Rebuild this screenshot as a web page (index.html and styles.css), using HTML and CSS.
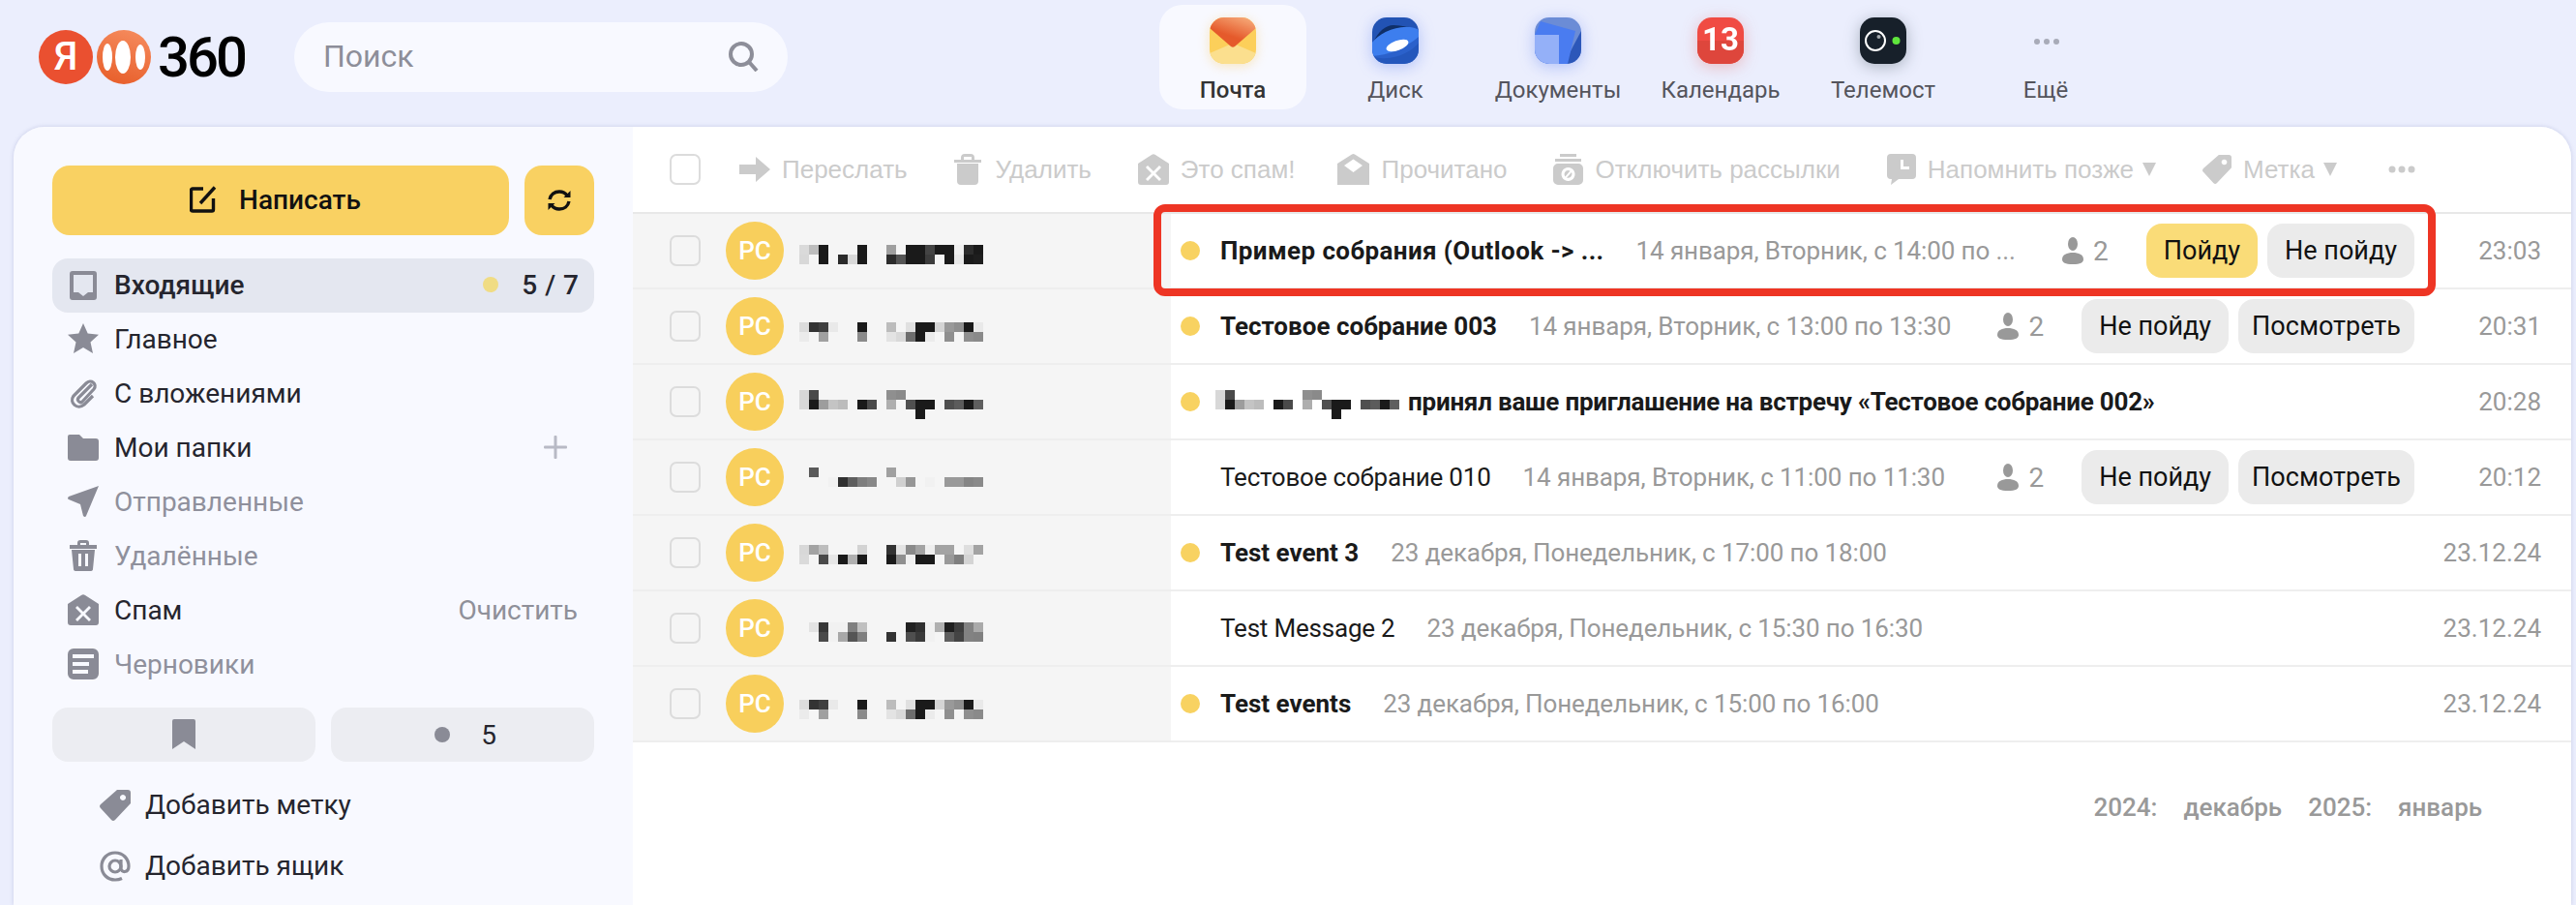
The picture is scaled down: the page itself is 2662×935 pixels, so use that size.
FILE: index.html
```html
<!DOCTYPE html>
<html lang="ru">
<head>
    <meta charset="UTF-8" />
    <title>Яндекс Почта</title>
    <link rel="stylesheet" href="styles.css">
</head>
<body>
    <svg class="defs" width="0" height="0">
        <defs>
            <symbol id="name-a" viewBox="0 0 190 30">
                <g class="px">
                    <rect x="0" y="0" fill="#dcdcdc"/><rect x="10" y="0" fill="#333"/><rect x="20" y="0" fill="#3f3f3f"/><rect x="30" y="0" fill="#e9e9e9"/><rect x="60" y="0" fill="#1a1a1a"/><rect x="90" y="0" fill="#bcbcbc"/><rect x="110" y="0" fill="#e0e0e0"/><rect x="120" y="0" fill="#1a1a1a"/><rect x="130" y="0" fill="#1a1a1a"/><rect x="140" y="0" fill="#d4d4d4"/><rect x="150" y="0" fill="#999"/><rect x="160" y="0" fill="#8f8f8f"/><rect x="170" y="0" fill="#1a1a1a"/><rect x="180" y="0" fill="#e9e9e9"/>
                    <rect x="0" y="10" fill="#ebebeb"/><rect x="20" y="10" fill="#a0a0a0"/><rect x="60" y="10" fill="#8a8a8a"/><rect x="90" y="10" fill="#e3e3e3"/><rect x="100" y="10" fill="#d9d9d9"/><rect x="110" y="10" fill="#6e6e6e"/><rect x="120" y="10" fill="#1a1a1a"/><rect x="130" y="10" fill="#ebebeb"/><rect x="150" y="10" fill="#8f8f8f"/><rect x="170" y="10" fill="#8f8f8f"/><rect x="180" y="10" fill="#8a8a8a"/>
                </g>
            </symbol>
            <symbol id="name-b" viewBox="0 0 190 30">
                <g class="px">
                    <rect x="0" y="0" fill="#d8d8d8"/><rect x="10" y="0" fill="#4a4a4a"/><rect x="90" y="0" fill="#8f8f8f"/><rect x="100" y="0" fill="#8a8a8a"/>
                    <rect x="0" y="10" fill="#d8d8d8"/><rect x="10" y="10" fill="#1a1a1a"/><rect x="20" y="10" fill="#9d9d9d"/><rect x="30" y="10" fill="#c4c4c4"/><rect x="40" y="10" fill="#bcbcbc"/><rect x="60" y="10" fill="#1a1a1a"/><rect x="70" y="10" fill="#4a4a4a"/><rect x="90" y="10" fill="#aeaeae"/><rect x="110" y="10" fill="#505050"/><rect x="120" y="10" fill="#1a1a1a"/><rect x="130" y="10" fill="#1a1a1a"/><rect x="150" y="10" fill="#4f4f4f"/><rect x="160" y="10" fill="#5c5c5c"/><rect x="170" y="10" fill="#1a1a1a"/><rect x="180" y="10" fill="#5f5f5f"/>
                    <rect x="120" y="20" fill="#1a1a1a"/>
                </g>
            </symbol>
            <symbol id="i-person" viewBox="0 0 22 28">
                <ellipse cx="11" cy="7" rx="5" ry="7"/>
                <path d="M0 23c0-5 5-7 11-7s11 2 11 7c0 3-3 5-11 5S0 26 0 23z"/>
            </symbol>
        </defs>
    </svg>

    <header class="top">
        <div class="logo">
            <span class="logo-ya">Я</span>
            <svg class="logo-mark" width="56" height="56" viewBox="0 0 56 56">
                <defs>
                    <linearGradient id="g-logo" x1="0.7" y1="0" x2="0.4" y2="1">
                        <stop offset="0" stop-color="#f58a5c"/>
                        <stop offset="1" stop-color="#e8602c"/>
                    </linearGradient>
                </defs>
                <circle cx="28" cy="28" r="28" fill="url(#g-logo)"/>
                <ellipse cx="11" cy="28" rx="5" ry="14" fill="#fff"/>
                <ellipse cx="27" cy="28" rx="8" ry="17" fill="#fff"/>
                <ellipse cx="45" cy="28" rx="5" ry="13" fill="#fff"/>
            </svg>
            <span class="logo-num">360</span>
        </div>
        <div class="search">
            <span>Поиск</span>
            <svg width="32" height="32" viewBox="0 0 32 32" fill="none" stroke="#8d8e99" stroke-width="4">
                <circle cx="14" cy="14" r="11"/>
                <path d="M22 22l8 9"/>
            </svg>
        </div>
        <nav class="apps">
            <a class="app active">
                <svg class="app-icon glow-y" width="48" height="48" viewBox="0 0 48 48">
                    <defs>
                        <linearGradient id="g-mail" x1="0.8" y1="0" x2="0.3" y2="0.9">
                            <stop offset="0" stop-color="#f6a877"/>
                            <stop offset="0.7" stop-color="#e55a2b"/>
                        </linearGradient>
                        <clipPath id="c-app"><rect width="48" height="48" rx="15"/></clipPath>
                    </defs>
                    <g clip-path="url(#c-app)">
                        <rect width="48" height="48" fill="#fccf5a"/>
                        <path d="M0 37l22-9.500q2-1 4 0l22 9.500v11H0z" fill="#fbdf8e"/>
                        <path d="M0 0h48v11L26 30q-2 1.500-4 0L0 11z" fill="url(#g-mail)"/>
                    </g>
                </svg>
                <span>Почта</span>
            </a>
            <a class="app">
                <svg class="app-icon glow-b" width="48" height="48" viewBox="0 0 48 48">
                    <g clip-path="url(#c-app)">
                        <rect width="48" height="48" fill="#2253b4"/>
                        <path d="M0 28C6 14 14 8 22 8c8 0 18 2 26 6v6L0 34z" fill="#0f2f68"/>
                        <ellipse cx="24" cy="26" rx="28" ry="14" transform="rotate(-20 24 26)" fill="#3d7eee"/>
                        <path d="M0 40c16-1 34-8 48-20v28H0z" fill="#2558bf" opacity=".75"/>
                        <ellipse cx="26" cy="29" rx="12" ry="5" transform="rotate(-20 26 29)" fill="#fff"/>
                    </g>
                </svg>
                <span>Диск</span>
            </a>
            <a class="app">
                <svg class="app-icon glow-b" width="48" height="48" viewBox="0 0 48 48">
                    <g clip-path="url(#c-app)">
                        <rect width="48" height="48" fill="#6b8cd6"/>
                        <path d="M48 14v34H30z" fill="#2c57b9"/>
                        <path d="M6 4l36 10-8 34H0V18z" fill="#4a7cf0"/>
                        <rect y="18" width="25" height="30" fill="#94b0f8"/>
                    </g>
                </svg>
                <span>Документы</span>
            </a>
            <a class="app">
                <svg class="app-icon glow-r" width="48" height="48" viewBox="0 0 48 48">
                    <g clip-path="url(#c-app)">
                        <rect width="48" height="48" fill="#f04b43"/>
                        <rect y="24" width="48" height="24" fill="#de463c"/>
                        <text class="cal-num" x="24" y="34" text-anchor="middle">13</text>
                    </g>
                </svg>
                <span>Календарь</span>
            </a>
            <a class="app">
                <svg class="app-icon glow-k" width="48" height="48" viewBox="0 0 48 48">
                    <g clip-path="url(#c-app)">
                        <rect width="48" height="48" fill="#17202a"/>
                        <circle cx="16" cy="24" r="10" fill="none" stroke="#fff" stroke-width="2"/>
                        <circle cx="19.500" cy="20" r="2" fill="#a5a9ad"/>
                        <circle cx="37.500" cy="24" r="4" fill="#5fe63c"/>
                    </g>
                </svg>
                <span>Телемост</span>
            </a>
            <a class="app">
                <svg class="app-icon" width="48" height="48" viewBox="0 0 48 48" fill="#a8abb8">
                    <circle cx="15" cy="25" r="3"/><circle cx="25" cy="25" r="3"/><circle cx="35" cy="25" r="3"/>
                </svg>
                <span>Ещё</span>
            </a>
        </nav>
    </header>

    <div class="panel">
        <aside class="side">
            <div class="compose-row">
                <button class="btn-compose">
                    <svg width="28" height="28" viewBox="0 0 28 28" fill="none" stroke="#111" stroke-width="3.400">
                        <path d="M14 3H3a1.500 1.500 0 0 0-1.500 1.500v20A1.500 1.500 0 0 0 3 26h20a1.500 1.500 0 0 0 1.500-1.500V13"/>
                        <path d="M11 18L26 1.500"/>
                    </svg>
                    Написать
                </button>
                <button class="btn-refresh">
                    <svg width="26" height="24" viewBox="0 0 26 24" fill="none" stroke="#111" stroke-width="3.400">
                        <path d="M3 11c1-5 5-8 10-8 3 0 6 1 8 4"/>
                        <path d="M23 13c-1 5-5 8-10 8-3 0-6-1-8-4"/>
                        <path d="M24.500 2v7h-7z" fill="#111" stroke="none"/>
                        <path d="M1.500 22v-7h7z" fill="#111" stroke="none"/>
                    </svg>
                </button>
            </div>

            <ul class="folders">
                <li class="folder current">
                    <svg class="ico" viewBox="0 0 32 32"><path fill-rule="evenodd" d="M5 2h22a3 3 0 0 1 3 3v24a3 3 0 0 1-3 3H5a3 3 0 0 1-3-3V5a3 3 0 0 1 3-3zm1 4v18h5l5 4 5-4h5V6z"/></svg>
                    <span class="folder-name">Входящие</span>
                    <i class="unread-dot"></i>
                    <span class="count">5 / 7</span>
                </li>
                <li class="folder">
                    <svg class="ico" viewBox="0 0 32 32"><path d="M16 0l4.700 10.500L32 11.800l-8.500 7.600L26 31l-10-6-10 6 2.500-11.600L0 11.800l11.300-1.300z"/></svg>
                    <span class="folder-name">Главное</span>
                </li>
                <li class="folder">
                    <svg class="ico line" viewBox="0 0 32 32"><path d="M25 7L11 21c-2 3 2 6 4 4L27 12c4-5-3-11-8-6L6 19c-5 7 4 15 11 9l9-9"/></svg>
                    <span class="folder-name">С вложениями</span>
                </li>
                <li class="folder">
                    <svg class="ico" viewBox="0 0 32 32"><path d="M2 3h10l4 4h13a3 3 0 0 1 3 3v17a3 3 0 0 1-3 3H3a3 3 0 0 1-3-3V5a2 2 0 0 1 2-2z"/></svg>
                    <span class="folder-name">Мои папки</span>
                    <svg class="plus" width="24" height="24" viewBox="0 0 24 24" fill="#b8bac5"><rect x="10.500" width="3" height="24" rx="1"/><rect y="10.500" width="24" height="3" rx="1"/></svg>
                </li>
                <li class="folder muted">
                    <svg class="ico" viewBox="0 0 32 32"><path d="M32 0L19 31q-1 2-3 0l-3-12L1 14q-2-1 0-3z"/></svg>
                    <span class="folder-name">Отправленные</span>
                </li>
                <li class="folder muted">
                    <svg class="ico" viewBox="0 0 32 32"><path fill-rule="evenodd" d="M10 3q0-3 3-3h6q3 0 3 3v2h8v4H2V5h8zm3 2h6V3h-6zM4 10h24l-2 20q0 2-3 2H9q-3 0-3-2zm7 4v13h3V14zm7 0v13h3V14z"/></svg>
                    <span class="folder-name">Удалённые</span>
                </li>
                <li class="folder">
                    <svg class="ico" viewBox="0 0 32 32"><path fill-rule="evenodd" d="M14 1q2-1.500 4 0l14 9v19a3 3 0 0 1-3 3H3a3 3 0 0 1-3-3V10zm-4 11l-2 2 6 6-6 6 2 2 6-6 6 6 2-2-6-6 6-6-2-2-6 6z"/></svg>
                    <span class="folder-name">Спам</span>
                    <span class="clean">Очистить</span>
                </li>
                <li class="folder muted">
                    <svg class="ico" viewBox="0 0 32 32"><path fill-rule="evenodd" d="M6 0h20a6 6 0 0 1 6 6v20a6 6 0 0 1-6 6H6a6 6 0 0 1-6-6V6a6 6 0 0 1 6-6zm-1 6v4h22V6zm0 8v4h17v-4zm0 8v4h16v-4z"/></svg>
                    <span class="folder-name">Черновики</span>
                </li>
            </ul>

            <div class="filters">
                <button class="filter">
                    <svg width="24" height="32" viewBox="0 0 24 32" fill="#8a8b96"><path d="M2 0h20a2 2 0 0 1 2 2v29l-12-8-12 8V2a2 2 0 0 1 2-2z"/></svg>
                </button>
                <button class="filter">
                    <i class="filter-dot"></i>
                    <span>5</span>
                </button>
            </div>

            <div class="add-row">
                <svg class="ico" viewBox="0 0 32 32"><path fill-rule="evenodd" d="M18 0h11a3 3 0 0 1 3 3v11L16 31q-2 2-4 0L1 19q-2-2 0-4zm6 5a3 3 0 1 0 0.010 0z"/></svg>
                <span>Добавить метку</span>
            </div>
            <div class="add-row">
                <svg class="ico line" viewBox="0 0 32 32"><circle cx="16" cy="16" r="6"/><path d="M22 9v9c0 5 8 5 8-2 0-8-6-14-14-14S2 8 2 16s6 14 14 14c3 0 5-.5 7-1.500"/></svg>
                <span>Добавить ящик</span>
            </div>
        </aside>

        <main class="main">
            <div class="toolbar">
                <i class="check"></i>
                <div class="tools">
                    <span class="tool">
                        <svg width="32" height="26" viewBox="0 0 32 26"><path d="M0 8h17V0l15 13-15 13v-8H0z"/></svg>
                        Переслать
                    </span>
                    <span class="tool tool-wide">
                        <svg width="28" height="32" viewBox="0 0 28 32"><path fill-rule="evenodd" d="M7 6V4q0-4 4-4h6q4 0 4 4v2h7v3H0V6zm3 0h8V3h-8zM3 10h22v18q0 4-4 4H7q-4 0-4-4z"/></svg>
                        Удалить
                    </span>
                    <span class="tool tool-spam">
                        <svg width="32" height="32" viewBox="0 0 32 32"><path fill-rule="evenodd" d="M14 1q2-1.500 4 0l14 9v19a3 3 0 0 1-3 3H3a3 3 0 0 1-3-3V10zm-4 11l-2 2 6 6-6 6 2 2 6-6 6 6 2-2-6-6 6-6-2-2-6 6z"/></svg>
                        Это спам!
                    </span>
                    <span class="tool">
                        <svg width="33" height="32" viewBox="0 0 33 32"><path fill-rule="evenodd" d="M15 0.500q1.500-1 3 0L33 10v22H0V10zm1.500 5L7 12l9.500 7L26 12z"/></svg>
                        Прочитано
                    </span>
                    <span class="tool">
                        <svg width="31" height="32" viewBox="0 0 31 32"><path fill-rule="evenodd" d="M7 0h17v3H7zM2 5h27v3H2zM5 10h21a5 5 0 0 1 5 5v12a5 5 0 0 1-5 5H5a5 5 0 0 1-5-5V15a5 5 0 0 1 5-5zm10.500 4a7 7 0 1 0 0.010 0zm0 3a4 4 0 0 1 2 .5l-5 6a4 4 0 0 1 3-6.500zm3.500 2a4 4 0 0 1-5 5.500z"/></svg>
                        Отключить рассылки
                    </span>
                    <span class="tool">
                        <svg width="30" height="32" viewBox="0 0 30 32"><path fill-rule="evenodd" d="M4 0h22a4 4 0 0 1 4 4v18a4 4 0 0 1-4 4H12l-8 6 1-6H4a4 4 0 0 1-4-4V4a4 4 0 0 1 4-4zm10 6v10h9v-3h-6V6z"/></svg>
                        Напомнить позже
                        <i class="caret"></i>
                    </span>
                    <span class="tool">
                        <svg width="30" height="32" viewBox="0 0 32 32"><path fill-rule="evenodd" d="M18 0h11a3 3 0 0 1 3 3v11L16 31q-2 2-4 0L1 19q-2-2 0-4zm6 5a3 3 0 1 0 0.010 0z"/></svg>
                        Метка
                        <i class="caret"></i>
                    </span>
                    <svg class="tool-more" width="28" height="8" viewBox="0 0 28 8"><circle cx="4" cy="4" r="3.500"/><circle cx="14" cy="4" r="3.500"/><circle cx="24" cy="4" r="3.500"/></svg>
                </div>
            </div>

            <div class="row">
                <div class="row-from">
                    <i class="check"></i>
                    <span class="avatar">РС</span>
                    <svg class="px name top-32" viewBox="0 0 190 30" width="190" height="30">
                        <rect x="0" y="0" fill="#dadada"/><rect x="10" y="0" fill="#bdbdbd"/><rect x="20" y="0" fill="#1a1a1a"/><rect x="60" y="0" fill="#1a1a1a"/><rect x="90" y="0" fill="#9f9f9f"/><rect x="110" y="0" fill="#1a1a1a"/><rect x="120" y="0" fill="#1a1a1a"/><rect x="130" y="0" fill="#444"/><rect x="140" y="0" fill="#1a1a1a"/><rect x="150" y="0" fill="#1a1a1a"/><rect x="160" y="0" fill="#efefef"/><rect x="170" y="0" fill="#2c2c2c"/><rect x="180" y="0" fill="#1a1a1a"/>
                        <rect x="0" y="10" fill="#d8d8d8"/><rect x="20" y="10" fill="#1a1a1a"/><rect x="40" y="10" fill="#2a2a2a"/><rect x="50" y="10" fill="#d8d8d8"/><rect x="60" y="10" fill="#1a1a1a"/><rect x="90" y="10" fill="#2c2c2c"/><rect x="100" y="10" fill="#555"/><rect x="110" y="10" fill="#1a1a1a"/><rect x="120" y="10" fill="#1a1a1a"/><rect x="130" y="10" fill="#3c3c3c"/><rect x="150" y="10" fill="#1a1a1a"/><rect x="160" y="10" fill="#e8e8e8"/><rect x="170" y="10" fill="#1a1a1a"/><rect x="180" y="10" fill="#1e1e1e"/>
                    </svg>
                </div>
                <div class="row-body">
                    <i class="dot"></i>
                    <span class="subject unread loose">Пример собрания (Outlook -&gt; ...</span>
                    <span class="date">14 января, Вторник, с 14:00 по ...</span>
                    <span class="people"><svg width="22" height="28"><use href="#i-person"/></svg>2</span>
                    <span class="actions">
                        <button class="act act-yes">Пойду</button>
                        <button class="act">Не пойду</button>
                    </span>
                    <span class="time">23:03</span>
                </div>
            </div>

            <div class="row">
                <div class="row-from">
                    <i class="check"></i>
                    <span class="avatar">РС</span>
                    <svg class="name top-34" width="190" height="30"><use href="#name-a"/></svg>
                </div>
                <div class="row-body">
                    <i class="dot"></i>
                    <span class="subject unread">Тестовое собрание 003</span>
                    <span class="date">14 января, Вторник, с 13:00 по 13:30</span>
                    <span class="people"><svg width="22" height="28"><use href="#i-person"/></svg>2</span>
                    <span class="actions">
                        <button class="act">Не пойду</button>
                        <button class="act act-view">Посмотреть</button>
                    </span>
                    <span class="time">20:31</span>
                </div>
            </div>

            <div class="row">
                <div class="row-from">
                    <i class="check"></i>
                    <span class="avatar">РС</span>
                    <svg class="name top-26" width="190" height="30"><use href="#name-b"/></svg>
                </div>
                <div class="row-body">
                    <i class="dot"></i>
                    <svg class="subject-name top-26" width="190" height="30"><use href="#name-b"/></svg>
                    <span class="subject unread tight">принял ваше приглашение на встречу «Тестовое собрание 002»</span>
                    <span class="time">20:28</span>
                </div>
            </div>

            <div class="row">
                <div class="row-from">
                    <i class="check"></i>
                    <span class="avatar">РС</span>
                    <svg class="px name top-28" viewBox="0 0 190 30" width="190" height="30">
                        <rect x="10" y="0" fill="#5a5a5a"/><rect x="90" y="0" fill="#a0a0a0"/>
                        <rect x="30" y="10" fill="#f1f1f1"/><rect x="40" y="10" fill="#303030"/><rect x="50" y="10" fill="#5e5e5e"/><rect x="60" y="10" fill="#7e7e7e"/><rect x="70" y="10" fill="#888"/><rect x="100" y="10" fill="#d0d0d0"/><rect x="110" y="10" fill="#969696"/><rect x="130" y="10" fill="#f1f1f1"/><rect x="150" y="10" fill="#999"/><rect x="160" y="10" fill="#999"/><rect x="170" y="10" fill="#858585"/><rect x="180" y="10" fill="#8a8a8a"/>
                    </svg>
                </div>
                <div class="row-body">
                    <i class="dot off"></i>
                    <span class="subject">Тестовое собрание 010</span>
                    <span class="date">14 января, Вторник, с 11:00 по 11:30</span>
                    <span class="people"><svg width="22" height="28"><use href="#i-person"/></svg>2</span>
                    <span class="actions">
                        <button class="act">Не пойду</button>
                        <button class="act act-view">Посмотреть</button>
                    </span>
                    <span class="time">20:12</span>
                </div>
            </div>

            <div class="row">
                <div class="row-from">
                    <i class="check"></i>
                    <span class="avatar">РС</span>
                    <svg class="px name top-30" viewBox="0 0 190 30" width="190" height="30">
                        <rect x="0" y="0" fill="#d8d8d8"/><rect x="10" y="0" fill="#a3a3a3"/><rect x="20" y="0" fill="#bdbdbd"/><rect x="60" y="0" fill="#d3d3d3"/><rect x="90" y="0" fill="#333"/><rect x="100" y="0" fill="#e3e3e3"/><rect x="110" y="0" fill="#8a8a8a"/><rect x="120" y="0" fill="#a3a3a3"/><rect x="130" y="0" fill="#eee"/><rect x="140" y="0" fill="#a3a3a3"/><rect x="150" y="0" fill="#a3a3a3"/><rect x="170" y="0" fill="#dedede"/><rect x="180" y="0" fill="#a3a3a3"/>
                        <rect x="0" y="10" fill="#dadada"/><rect x="20" y="10" fill="#4a4a4a"/><rect x="30" y="10" fill="#e6e6e6"/><rect x="40" y="10" fill="#1a1a1a"/><rect x="50" y="10" fill="#b0b0b0"/><rect x="60" y="10" fill="#1a1a1a"/><rect x="90" y="10" fill="#1a1a1a"/><rect x="100" y="10" fill="#8f8f8f"/><rect x="110" y="10" fill="#f0f0f0"/><rect x="120" y="10" fill="#1a1a1a"/><rect x="130" y="10" fill="#1a1a1a"/><rect x="150" y="10" fill="#999"/><rect x="160" y="10" fill="#7f7f7f"/><rect x="170" y="10" fill="#d4d4d4"/>
                    </svg>
                </div>
                <div class="row-body">
                    <i class="dot"></i>
                    <span class="subject unread">Test event 3</span>
                    <span class="date">23 декабря, Понедельник, с 17:00 по 18:00</span>
                    <span class="time">23.12.24</span>
                </div>
            </div>

            <div class="row">
                <div class="row-from">
                    <i class="check"></i>
                    <span class="avatar">РС</span>
                    <svg class="px name top-32" viewBox="0 0 190 30" width="190" height="30">
                        <rect x="10" y="0" fill="#e3e3e3"/><rect x="20" y="0" fill="#383838"/><rect x="30" y="0" fill="#f1f1f1"/><rect x="40" y="0" fill="#f1f1f1"/><rect x="50" y="0" fill="#808080"/><rect x="60" y="0" fill="#c0c0c0"/><rect x="110" y="0" fill="#222"/><rect x="120" y="0" fill="#303030"/><rect x="130" y="0" fill="#f1f1f1"/><rect x="140" y="0" fill="#b0b0b0"/><rect x="150" y="0" fill="#1f1f1f"/><rect x="160" y="0" fill="#3e3e3e"/><rect x="170" y="0" fill="#828282"/><rect x="180" y="0" fill="#aaa"/>
                        <rect x="20" y="10" fill="#4a4a4a"/><rect x="30" y="10" fill="#f1f1f1"/><rect x="40" y="10" fill="#a8a8a8"/><rect x="50" y="10" fill="#555"/><rect x="60" y="10" fill="#7f7f7f"/><rect x="90" y="10" fill="#333"/><rect x="110" y="10" fill="#4f4f4f"/><rect x="120" y="10" fill="#3a3a3a"/><rect x="130" y="10" fill="#f1f1f1"/><rect x="150" y="10" fill="#5f5f5f"/><rect x="160" y="10" fill="#444"/><rect x="170" y="10" fill="#828282"/><rect x="180" y="10" fill="#808080"/>
                    </svg>
                </div>
                <div class="row-body">
                    <i class="dot off"></i>
                    <span class="subject">Test Message 2</span>
                    <span class="date">23 декабря, Понедельник, с 15:30 по 16:30</span>
                    <span class="time">23.12.24</span>
                </div>
            </div>

            <div class="row">
                <div class="row-from">
                    <i class="check"></i>
                    <span class="avatar">РС</span>
                    <svg class="name top-34" width="190" height="30"><use href="#name-a"/></svg>
                </div>
                <div class="row-body">
                    <i class="dot"></i>
                    <span class="subject unread">Test events</span>
                    <span class="date">23 декабря, Понедельник, с 15:00 по 16:00</span>
                    <span class="time">23.12.24</span>
                </div>
            </div>

            <div class="pager">
                <span>2024:</span>
                <span>декабрь</span>
                <span>2025:</span>
                <span>январь</span>
            </div>
        </main>

        <div class="highlight"></div>
    </div>
</body>
</html>
```

FILE: styles.css
```css
* {
    box-sizing: border-box;
}
html, body {
    margin: 0;
    height: 935px;
    overflow: hidden;
}
body {
    font-family: Roboto, "Noto Sans", sans-serif;
    font-size: 28px;
    color: #25252e;
    background: #ebeefd;
}
button {
    font: inherit;
    color: inherit;
    border: 0;
    padding: 0;
}
.defs {
    position: absolute;
}
.px rect {
    width: 10px;
    height: 10px;
}

/* header */
.top {
    display: flex;
    align-items: flex-start;
    height: 131px;
}
.logo {
    display: flex;
    align-items: center;
    gap: 4px;
    margin: 31px 0 0 40px;
    height: 56px;
    width: 264px;
}
.logo-ya {
    width: 56px;
    height: 56px;
    border-radius: 50%;
    background: #ea5030;
    color: #fff;
    font-size: 40px;
    font-weight: 500;
    line-height: 56px;
    text-align: center;
}
.logo-num {
    font-size: 58px;
    font-weight: 500;
    letter-spacing: -3px;
    color: #000;
    margin-left: 3px;
}
.search {
    display: flex;
    align-items: center;
    justify-content: space-between;
    width: 510px;
    height: 72px;
    margin-top: 23px;
    padding: 0 30px 2px 30px;
    border-radius: 36px;
    background: #f8f9ff;
    font-size: 32px;
    color: #8d8e99;
}
.apps {
    display: flex;
    gap: 16px;
    margin: 5px 0 0 384px;
}
.app {
    display: flex;
    flex-direction: column;
    align-items: center;
    width: 152px;
    height: 108px;
    padding-top: 13px;
    border-radius: 24px;
    font-size: 24px;
    color: #54545c;
}
.app span {
    margin-top: 11px;
    line-height: 32px;
}
.app.active {
    background: #f8f9ff;
    color: #333;
    font-weight: 500;
}
.glow-y {
    filter: drop-shadow(0 2px 6px rgba(250, 200, 90, .4));
}
.glow-b {
    filter: drop-shadow(0 3px 8px rgba(70, 110, 240, .35));
}
.glow-r {
    filter: drop-shadow(0 3px 8px rgba(230, 70, 60, .3));
}
.glow-k {
    filter: drop-shadow(0 3px 8px rgba(20, 40, 50, .3));
}
.cal-num {
    font-size: 33px;
    font-weight: 700;
    fill: #fff;
}

/* panel */
.panel {
    position: relative;
    display: flex;
    height: 804px;
    margin: 0 5px 0 14px;
    border-radius: 32px 32px 0 0;
    overflow: hidden;
    box-shadow: 0 0 4px rgba(90, 100, 160, .25);
}
.side {
    width: 640px;
    flex: none;
    padding: 40px 40px 0;
    background: #f8f9ff;
}
.compose-row {
    display: flex;
    gap: 16px;
}
.btn-compose, .btn-refresh {
    display: flex;
    align-items: center;
    justify-content: center;
    height: 72px;
    border-radius: 18px;
    background: #f9d162;
    color: #111;
    font-weight: 500;
}
.btn-compose {
    flex: 1;
    gap: 23px;
    padding: 0 11px 2px 0;
}
.btn-refresh {
    width: 72px;
}
.folders {
    list-style: none;
    margin: 24px 0 16px;
    padding: 0;
}
.folder {
    display: flex;
    align-items: center;
    height: 56px;
    padding: 0 16px 2px;
    border-radius: 16px;
}
.folder.current {
    background: #e4e7f0;
    font-weight: 500;
}
.folder.muted {
    color: #8f909c;
}
.ico {
    width: 32px;
    height: 32px;
    flex: none;
    fill: #8a8b96;
}
.ico.line {
    fill: none;
    stroke: #8a8b96;
    stroke-width: 3.2;
}
.folder-name {
    margin-left: 16px;
}
.unread-dot {
    width: 16px;
    height: 16px;
    margin-left: auto;
    border-radius: 50%;
    background: #f0dc84;
}
.count {
    margin-left: 24px;
    word-spacing: 1px;
    white-space: nowrap;
}
.plus {
    margin: 0 12px 0 auto;
}
.clean {
    margin: 0 1px 0 auto;
    color: #8f9099;
}
.filters {
    display: flex;
    gap: 16px;
}
.filter {
    display: flex;
    align-items: center;
    justify-content: center;
    flex: 1;
    gap: 32px;
    height: 56px;
    border-radius: 16px;
    background: #ecedf2;
}
.filter-dot {
    width: 16px;
    height: 16px;
    margin-left: 6px;
    border-radius: 50%;
    background: #8a8b96;
}
.add-row {
    display: flex;
    align-items: center;
    gap: 15px;
    height: 63px;
    margin-left: 49px;
}
.filters + .add-row {
    margin-top: 13px;
}

/* toolbar */
.main {
    flex: 1;
    min-width: 0;
    background: #fff;
}
.check {
    display: block;
    flex: none;
    width: 32px;
    height: 32px;
    margin-left: 38px;
    border: 2px solid #dcdcdc;
    border-radius: 7px;
}
.toolbar {
    display: flex;
    align-items: center;
    height: 90px;
    border-bottom: 2px solid #e8e8e8;
    font-family: "Liberation Sans", Arial, sans-serif;
    font-size: 26px;
    color: #cbcbcb;
}
.tools {
    display: flex;
    align-items: center;
    gap: 48px;
    margin-left: 40px;
}
.tool {
    display: flex;
    align-items: center;
    gap: 12px;
    white-space: nowrap;
}
.tool-wide {
    gap: 15px;
}
.tool-spam {
    margin-right: -4px;
}
.tools svg {
    fill: #cbcbcb;
}
.caret {
    width: 0;
    height: 0;
    margin-left: -3px;
    border: 7px solid transparent;
    border-top: 14px solid #cbcbcb;
    border-bottom: 0;
}
.tool-more {
    margin-left: 5px;
}

/* rows */
.row {
    display: flex;
    height: 78px;
    border-bottom: 2px solid #eee;
    font-size: 26px;
}
.row-from {
    display: flex;
    align-items: center;
    width: 556px;
    flex: none;
    background: #f5f5f5;
}
.avatar {
    width: 60px;
    height: 60px;
    margin-left: 26px;
    border-radius: 50%;
    background: #f8cf5c;
    color: #fff;
    font-size: 26px;
    font-weight: 500;
    line-height: 60px;
    text-align: center;
}
.name {
    align-self: flex-start;
    margin-left: 16px;
}
.top-26 {
    margin-top: 26px;
}
.top-28 {
    margin-top: 28px;
}
.top-30 {
    margin-top: 30px;
}
.top-32 {
    margin-top: 32px;
}
.top-34 {
    margin-top: 34px;
}
.row-body {
    display: flex;
    align-items: center;
    flex: 1;
    min-width: 0;
    padding-right: 31px;
    white-space: nowrap;
}
.dot {
    flex: none;
    width: 20px;
    height: 20px;
    margin-left: 10px;
    border-radius: 50%;
    background: #f8d261;
}
.dot.off {
    visibility: hidden;
}
.subject {
    margin-left: 21px;
    letter-spacing: -.2px;
    color: #1a1a1a;
}
.subject.unread {
    font-weight: 700;
    letter-spacing: 0;
}
.subject.loose {
    letter-spacing: .4px;
}
.subject.tight {
    letter-spacing: -.23px;
}
.subject-name {
    align-self: flex-start;
    flex: none;
    margin-left: 16px;
}
.subject-name + .subject {
    margin-left: 9px;
}
.date {
    margin-left: 33px;
    letter-spacing: -.1px;
    color: #999;
}
.people {
    display: flex;
    align-items: center;
    gap: 10px;
    margin: 0 39px 0 auto;
    color: #999;
    font-size: 28px;
}
.people svg {
    fill: #999;
}
.actions {
    display: flex;
    gap: 10px;
}
.act {
    height: 56px;
    padding: 0 18px;
    border-radius: 16px;
    background: #ebebeb;
    color: #111;
    font-size: 27px;
}
.act-yes {
    background: #fadc78;
}
.act-view {
    padding: 0 14px;
}
.time {
    flex: none;
    margin-left: auto;
    text-align: right;
    color: #999;
}
.actions + .time {
    width: 131px;
    margin-left: 0;
}

.pager {
    display: flex;
    justify-content: flex-end;
    gap: 27px;
    padding: 50px 92px 0 0;
    font-size: 26px;
    font-weight: 500;
    line-height: 34px;
    color: #999;
}

/* red frame drawn over the first row */
.highlight {
    position: absolute;
    left: 1178px;
    top: 80px;
    width: 1325px;
    height: 95px;
    border: 8px solid #ee3524;
    border-radius: 12px;
}
```
